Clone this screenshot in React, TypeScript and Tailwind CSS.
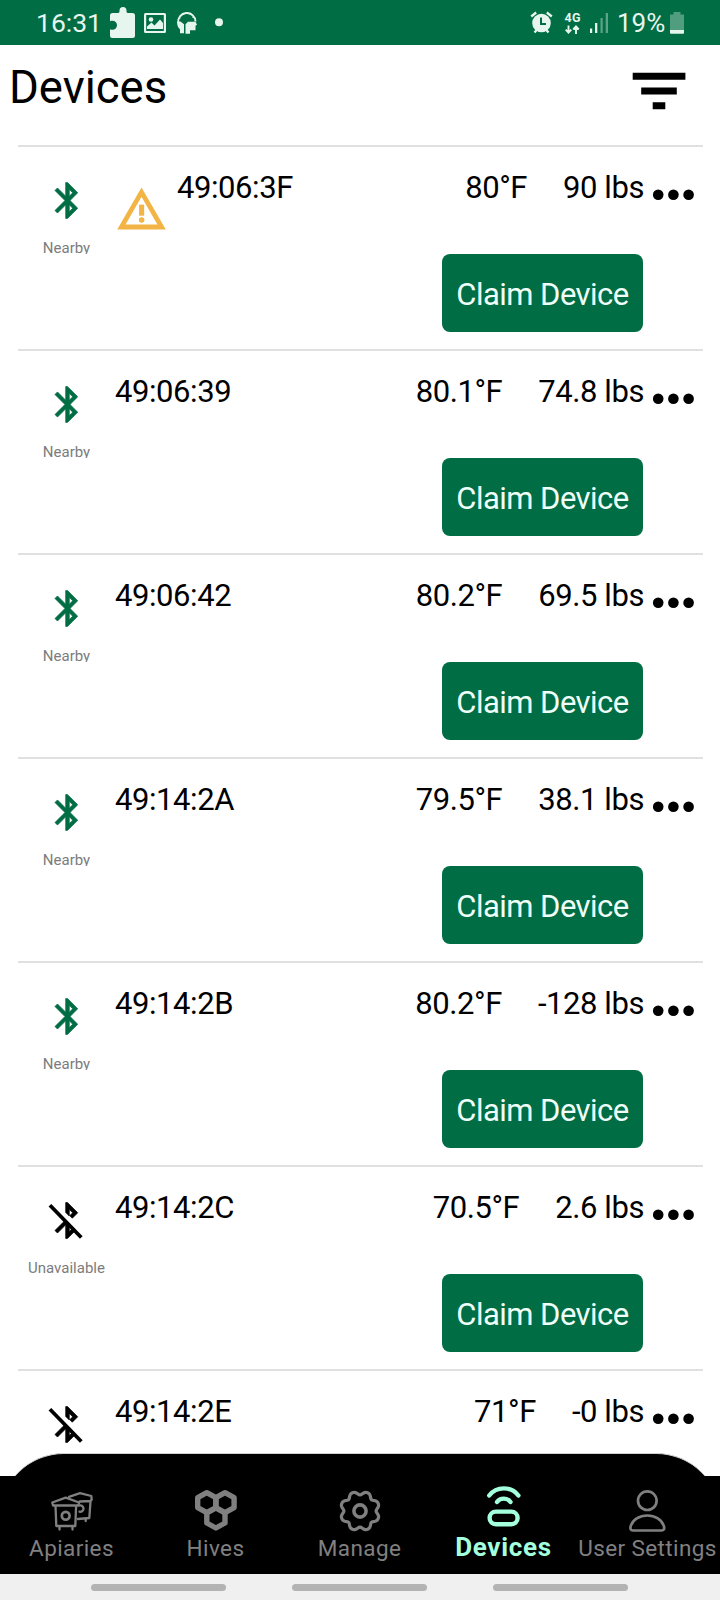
import React from "react";

type Device = { id: string; temp: string; weight: string; nearby: boolean; warn?: boolean };

const devices: Device[] = [
  { id: "49:06:3F", temp: "80°F", weight: "90 lbs", nearby: true, warn: true },
  { id: "49:06:39", temp: "80.1°F", weight: "74.8 lbs", nearby: true },
  { id: "49:06:42", temp: "80.2°F", weight: "69.5 lbs", nearby: true },
  { id: "49:14:2A", temp: "79.5°F", weight: "38.1 lbs", nearby: true },
  { id: "49:14:2B", temp: "80.2°F", weight: "-128 lbs", nearby: true },
  { id: "49:14:2C", temp: "70.5°F", weight: "2.6 lbs", nearby: false },
  { id: "49:14:2E", temp: "71°F", weight: "-0 lbs", nearby: false },
];

function StatusBar() {
  return (
    <div className="flex h-[45px] shrink-0 items-center bg-[#006d44] pl-[36px] pr-[35px] text-[26.5px] leading-[45px] text-[#e6f5ee]">
      <span className="w-[74px] whitespace-nowrap">16:31</span>
      <svg className="h-[45px] w-[113px] shrink-0" viewBox="110 0 113 45" fill="currentColor">
        <path d="M112.500 13h5.500c1.500 0 1.500-1 1.500-2.500a3.500 3.500 0 0 1 7 0c0 1.500 0 2.500 1.500 2.500h4.500a2.500 2.500 0 0 1 2.500 2.500V35.500a2.500 2.500 0 0 1-2.500 2.500H112.500a2.500 2.500 0 0 1-2.500-2.500V29.300c1 .5 1.500.5 2.500.5a4.500 4.500 0 0 0 0-9c-1 0-1.500 0-2.500.5V15.500A2.500 2.500 0 0 1 112.500 13z" />
        <path fillRule="evenodd" d="M145.500 13h19a1.500 1.500 0 0 1 1.500 1.500v17a1.500 1.500 0 0 1-1.500 1.500h-19a1.500 1.500 0 0 1-1.500-1.500v-17a1.500 1.500 0 0 1 1.500-1.500zm.7 2v16h17.600V15z" />
        <path d="M147 29v-2.500l4.500-4 3 3 5.500-6 3 3.500v6z" />
        <circle cx="151" cy="19.500" r="2.300" />
        <path d="M177 21.500h3.500l3.500 2.800v9h-4v-4c-2-1.500-3-4-3-7.800zM185.500 24.300l2.500-2.500h7.500l1.500 3-1.500 1v4.500h-5.500v3.500h-4.500z" />
        <path d="M178.200 23a8.700 8.700 0 1 1 17.300-1.500" fill="none" stroke="currentColor" strokeWidth="1.900" />
        <path d="M183 13.500l1 1.200M187 12v2M191 13l-1 1.700M194 17l-1.500.5M179 18h1.500" fill="none" stroke="currentColor" strokeWidth="1.200" />
        <circle cx="219" cy="22.300" r="4" />
      </svg>
      <div className="grow" />
      <svg className="h-[45px] w-[88px] shrink-0" viewBox="529 0 88 45" fill="currentColor">
        <circle cx="541.500" cy="23" r="9.300" />
        <path d="M531.200 16.500l5-4M546.800 12.500l5 4M534.500 32.500l3-3.500M548.500 32.500l-3-3.500" stroke="currentColor" strokeWidth="2.300" />
        <path d="M541 17.500v6.500h5" fill="none" stroke="#006d44" strokeWidth="2" />
        <text x="564.600" y="21.700" fontSize="12.500" fontWeight="700" fontFamily="Roboto" textLength="16">4G</text>
        <path d="M568.500 25.500v7M565.700 29.700l2.800 3 2.800-3M576 34v-7M573.200 29.500l2.800-3 2.800 3" fill="none" stroke="currentColor" strokeWidth="1.900" />
        <path d="M590 28.500h2.200v4.500H590zM595 23h2.300v10H595z" />
        <path opacity=".4" d="M600.500 18h2.200v15h-2.200zM605.700 13h2.300v20h-2.300z" />
      </svg>
      <span className="w-[52px] whitespace-nowrap pt-px text-[26px]">19%</span>
      <svg className="h-[45px] w-[16px] shrink-0" viewBox="669 0 16 45" fill="currentColor">
        <path opacity=".35" d="M673.500 12h7v2.500h3.500V30h-14V14.500h3.500z" />
        <path d="M670 30h14v3a.8.8 0 0 1-.8.8h-12.400a.8.800 0 0 1-.8-.8z" />
      </svg>
    </div>
  );
}

function BluetoothIcon({ nearby }: { nearby: boolean }) {
  return nearby ? (
    <svg className="ml-[1px] h-[43px] w-[43px]" viewBox="0 0 24 24" fill="#006d44" stroke="#006d44" strokeWidth="0.400">
      <path d="M17.710 7.710L12 2h-1v7.590L6.410 5 5 6.410 10.590 12 5 17.590 6.410 19 11 14.410V22h1l5.710-5.710-4.300-4.290 4.300-4.290zM13 5.830l1.880 1.880L13 9.590V5.830zm1.880 10.460L13 18.170v-3.760l1.880 1.880z" />
    </svg>
  ) : (
    <svg className="ml-[2px] h-[43px] w-[43px]" viewBox="0 0 24 24" stroke="#000" strokeWidth="0.400">
      <path d="M13 5.830l1.880 1.880-1.600 1.600 1.410 1.410 3.020-3.020L12 2h-1v5.500l2 2zM10.590 12L5 17.590 6.410 19 11 14.410V22h1l4.600-4.600-5-5zM13 18.170v-3.760l1.880 1.880z" />
      <path d="M2.200 3.500L19.700 21.500" strokeWidth="2.100" />
    </svg>
  );
}

function WarningIcon() {
  return (
    <svg className="mt-[36px] h-[53px] w-[53px] shrink-0" viewBox="0 0 24 24" fill="#f2b445">
      <path fillRule="evenodd" d="M12 2L1 21h22zM12 6.200l7.200 12.600h-14.400z" />
      <rect x="10.900" y="9.800" width="2.300" height="5" />
      <circle cx="12.050" cy="16.800" r="1.250" />
    </svg>
  );
}

function Row({ d }: { d: Device }) {
  return (
    <div className="flex h-[204px] shrink-0 border-t-2 border-[#e0e0e0]">
      <div className="flex w-[97px] shrink-0 flex-col items-center pt-[32px]">
        <BluetoothIcon nearby={d.nearby} />
        <span className="mt-[17px] h-[15px] overflow-hidden text-[15px] leading-[18px] text-[#7c7c7c]">
          {d.nearby ? "Nearby" : "Unavailable"}
        </span>
      </div>
      {d.warn && <WarningIcon />}
      <span className={`${d.warn ? "ml-[9px]" : ""} pt-[23px] text-[31px] leading-[36px] tracking-[-0.420px]`}>{d.id}</span>
      <div className="ml-auto flex flex-col items-end">
        <div className="-mr-[1px] flex gap-[36px] whitespace-nowrap pt-[23px] text-[31px] leading-[36px] tracking-[-0.420px]">
          <span>{d.temp}</span>
          <span>{d.weight}</span>
        </div>
        <button className="mt-[48px] h-[78px] w-[201px] whitespace-nowrap rounded-[8px] bg-[#006d44] pt-[3px] text-[31px] leading-[36px] tracking-[-0.530px] text-[#f0fffa]">
          Claim Device
        </button>
      </div>
      <svg className="ml-[7px] mr-[7px] mt-[40px] h-[16px] w-[46px] shrink-0" viewBox="0 0 46 16">
        <circle cx="8.200" cy="7.700" r="5.300" />
        <circle cx="23.400" cy="7.700" r="5.300" />
        <circle cx="38.600" cy="7.700" r="5.300" />
      </svg>
    </div>
  );
}

const gearPoints = Array.from({ length: 129 }, (_, i) => {
  const a = (i / 128) * Math.PI * 2;
  const r = 19.7 - 3.6 * Math.pow((1 + Math.cos(8 * a)) / 2, 1.4);
  return `${(21 + r * Math.sin(a)).toFixed(2)},${(21 - r * Math.cos(a)).toFixed(2)}`;
}).join(" ");

const hex = (cx: number, cy: number) =>
  `M${cx} ${cy - 10}l9.100 5v10l-9.100 5l-9.100-5v-10z`;

function NavIcon({ name }: { name: string }) {
  const cls = "h-[46px] w-[46px] shrink-0";
  const common = { fill: "none", stroke: "currentColor", strokeLinejoin: "round" as const, strokeLinecap: "round" as const };
  if (name === "Apiaries")
    return (
      <svg className={cls} viewBox="49 1488 46 46" {...common} strokeWidth="2.300">
        <path d="M52.300 1502.500l13.400-4.800 13.400 4.800-.8 3H53.100zM55.500 1506l.8 20h19l.8-20M59.500 1526v3.500M72.500 1526v3.500" />
        <circle cx="65.700" cy="1515.700" r="3.900" strokeWidth="2.700" />
        <path d="M69 1496.800l11-3.600 11.300 2.800.4 3.500-1 1.500-11 .5M90.500 1501.500l-1.200 16.500-11.500 1M85.700 1519v2" />
        <path d="M79.500 1505.500a3.200 3.200 0 1 1 0 6.200" />
      </svg>
    );
  if (name === "Hives")
    return (
      <svg className={cls} viewBox="193 1488 46 46" {...common} strokeWidth="5.400">
        <path d={hex(206.8, 1502.6)} />
        <path d={hex(225, 1502.6)} />
        <path d={hex(215.9, 1518)} />
      </svg>
    );
  if (name === "Manage")
    return (
      <svg className={cls} viewBox="-2 -2 46 46" {...common} strokeWidth="3.200">
        <polygon points={gearPoints} />
        <circle cx="21" cy="21" r="6.100" strokeWidth="3.600" />
      </svg>
    );
  if (name === "Devices")
    return (
      <svg className={cls} viewBox="481 1484 46 46" {...common} strokeWidth="4.400">
        <path d="M489.200 1495.500a18.500 18.500 0 0 1 29.200 0M497 1502a8.500 8.500 0 0 1 13.500 0" />
        <rect x="489.600" y="1511.600" width="28" height="12.600" rx="6.300" />
      </svg>
    );
  return (
    <svg className={cls} viewBox="625 1488 46 46" {...common} strokeWidth="2.700">
      <circle cx="647.300" cy="1500.700" r="9.300" />
      <path d="M633 1530.500h28.500c2.500 0 3-1.500 2.500-4-2-7-9-11-16.700-11s-14.800 4-16.700 11c-.5 2.500 0 4 2.400 4z" />
    </svg>
  );
}

const tabs = ["Apiaries", "Hives", "Manage", "Devices", "User Settings"];

function BottomNav() {
  return (
    <nav className="relative -mt-[23px] shrink-0">
      <div className="h-[23px] overflow-hidden">
        <div className="h-[140px] rounded-t-[64px] border-t border-[#d0d0d0] bg-black" />
      </div>
      <div className="grid h-[98px] grid-cols-5 bg-black">
        {tabs.map((t) => {
          const active = t === "Devices";
          return (
            <div
              key={t}
              className={`flex flex-col items-center whitespace-nowrap ${active ? "pt-[8px] text-[#a4ffdc]" : "pt-[12px] text-[#808080]"}`}
            >
              <NavIcon name={t} />
              <span
                className={
                  active
                    ? "mr-[1px] mt-[2px] text-[26px] font-bold leading-[30px] tracking-[0.700px]"
                    : "-mt-[1px] mr-[1px] text-[22.500px] leading-[30px] tracking-[0.400px]"
                }
              >
                {t}
              </span>
            </div>
          );
        })}
      </div>
    </nav>
  );
}

export default function App() {
  return (
    <div className="flex h-[1600px] w-[720px] flex-col overflow-hidden bg-white font-['Roboto',sans-serif] text-black">
      <StatusBar />
      <header className="flex h-[100px] shrink-0 items-start justify-between pl-[9px] pr-[32px]">
        <h1 className="pt-[16px] text-[45.500px] leading-[54px]">Devices</h1>
        <svg className="mt-[24px] h-[44px] w-[58px]" viewBox="630 69 58 44">
          <path d="M632.700 72.800h52.700v7h-52.700zM641.200 87.400h35.600v7h-35.600zM652.700 102.200h12.600v7h-12.600z" />
        </svg>
      </header>
      <main className="flex min-h-0 grow flex-col overflow-hidden pl-[18px] pr-[17px]">
        {devices.map((d) => (
          <Row key={d.id} d={d} />
        ))}
      </main>
      <BottomNav />
      <div className="flex h-[26px] shrink-0 items-center justify-center gap-[66px] bg-[#f0f0f0] pr-[2px]">
        <div className="h-[7px] w-[135px] rounded-full bg-[#b3b3b3]" />
        <div className="h-[7px] w-[135px] rounded-full bg-[#b3b3b3]" />
        <div className="h-[7px] w-[135px] rounded-full bg-[#b3b3b3]" />
      </div>
    </div>
  );
}
